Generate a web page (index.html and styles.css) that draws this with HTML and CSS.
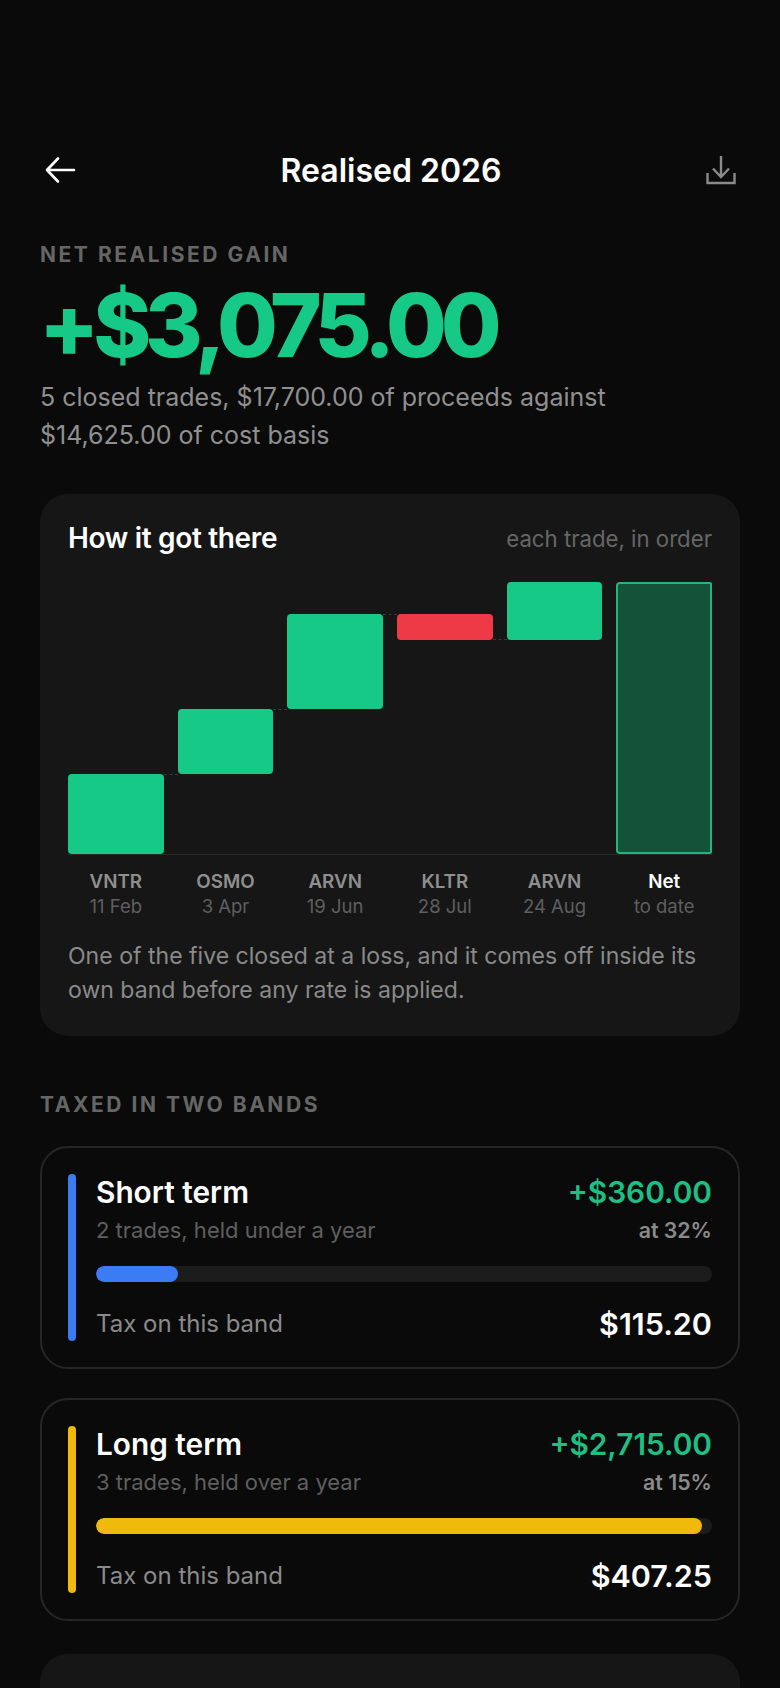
FILE: index.html
```html
<!DOCTYPE html>
<html lang="en">
<head>
<meta charset="utf-8">
<title>Realised 2026</title>
<link rel="stylesheet" href="styles.css">
</head>
<body>
<main class="screen">
  <header class="topbar">
    <svg class="icon icon-back" width="32" height="28" viewBox="0 0 32 28" fill="none" stroke="currentColor" stroke-width="2.6" stroke-linecap="round" stroke-linejoin="round"><path d="M30 14H3M14 2.500 3 14l11 11.500"/></svg>
    <h1 class="title">Realised 2026</h1>
    <svg class="icon icon-save" width="30" height="30" viewBox="0 0 30 30" fill="none" stroke="currentColor" stroke-width="2.400"><path d="M1.500 18v10h27V18"/><path d="M15 1v21M7 13.500l8 8.500 8-8.500"/></svg>
  </header>

  <section class="hero">
    <div class="eyebrow">NET REALISED GAIN</div>
    <div class="hero-value">+$3,075.00</div>
    <p class="hero-sub">5 closed trades, $17,700.00 of proceeds against<br>$14,625.00 of cost basis</p>
  </section>

  <section class="chart-card">
    <div class="chart-head">
      <h2 class="chart-title">How it got there</h2>
      <span class="chart-note">each trade, in order</span>
    </div>
    <div class="chart">
      <div class="col"><div class="bar up link-top" style="height:80px;margin-bottom:0"></div></div>
      <div class="col"><div class="bar up link-top" style="height:65px;margin-bottom:80px"></div></div>
      <div class="col"><div class="bar up link-top" style="height:95px;margin-bottom:145px"></div></div>
      <div class="col"><div class="bar down link-bottom" style="height:26px;margin-bottom:214px"></div></div>
      <div class="col"><div class="bar up" style="height:58px;margin-bottom:214px"></div></div>
      <div class="col"><div class="bar net" style="height:272px"></div></div>
    </div>
    <div class="axis">
      <div class="tick"><b>VNTR</b><span>11 Feb</span></div>
      <div class="tick"><b>OSMO</b><span>3 Apr</span></div>
      <div class="tick"><b>ARVN</b><span>19 Jun</span></div>
      <div class="tick"><b>KLTR</b><span>28 Jul</span></div>
      <div class="tick"><b>ARVN</b><span>24 Aug</span></div>
      <div class="tick tick-net"><b>Net</b><span>to date</span></div>
    </div>
    <p class="chart-foot">One of the five closed at a loss, and it comes off inside its own band before any rate is applied.</p>
  </section>

  <div class="eyebrow section-label">TAXED IN TWO BANDS</div>

  <section class="band">
    <div class="accent accent-blue"></div>
    <div class="band-body">
      <div class="band-row">
        <h3 class="band-name">Short term</h3>
        <span class="band-gain">+$360.00</span>
      </div>
      <div class="band-row band-row-sub">
        <span class="band-desc">2 trades, held under a year</span>
        <span class="band-rate">at 32%</span>
      </div>
      <div class="track"><div class="fill fill-blue" style="width:13.3%"></div></div>
      <div class="band-row band-row-tax">
        <span class="tax-label">Tax on this band</span>
        <span class="tax-value">$115.20</span>
      </div>
    </div>
  </section>

  <section class="band">
    <div class="accent accent-yellow"></div>
    <div class="band-body">
      <div class="band-row">
        <h3 class="band-name">Long term</h3>
        <span class="band-gain">+$2,715.00</span>
      </div>
      <div class="band-row band-row-sub">
        <span class="band-desc">3 trades, held over a year</span>
        <span class="band-rate">at 15%</span>
      </div>
      <div class="track"><div class="fill fill-yellow" style="width:98.4%"></div></div>
      <div class="band-row band-row-tax">
        <span class="tax-label">Tax on this band</span>
        <span class="tax-value">$407.25</span>
      </div>
    </div>
  </section>

  <section class="next-card"></section>
</main>
</body>
</html>
```
FILE: styles.css
```css
* { box-sizing: border-box; }
html, body { margin: 0; padding: 0; background: #0a0a0a; }
body { height: 1688px; overflow: hidden; font-family: Inter, "Liberation Sans", sans-serif; color: #fff; }
h1, h2, h3, p { margin: 0; font: inherit; }

.screen { width: 780px; height: 1688px; overflow: hidden; padding: 150px 40px 0; }

.topbar { display: flex; align-items: center; justify-content: space-between; height: 40px; position: relative; }
.icon { display: block; flex: none; }
.icon-back { color: #fff; margin-left: 4px; }
.icon-save { color: #8a8a8a; margin-right: 4px; margin-top: -1px; }
.title { font-size: 32px; font-weight: 600; line-height: 40px; padding-top: 1px; }

.hero { margin-top: 52px; }
.eyebrow { font-size: 21px; line-height: 26px; font-weight: 700; letter-spacing: 2.550px; color: #666; }
.hero-value { font-size: 88px; line-height: 96px; font-weight: 800; letter-spacing: -6.200px; color: #17c987; margin-top: 9px; margin-left: -1px; }
.hero-sub { font-size: 25px; line-height: 38px; color: #909090; margin-top: 5px; }

.chart-card { margin-top: 40px; height: 542px; background: #161616; border-radius: 28px; padding: 28px; }
.chart-head { display: flex; justify-content: space-between; align-items: center; height: 32px; }
.chart-title { font-size: 28px; font-weight: 600; line-height: 32px; letter-spacing: -0.330px; }
.chart-note { font-size: 22.200px; color: #666; }

.chart { display: grid; grid-template-columns: repeat(6, 1fr); column-gap: 14px; height: 273px; margin-top: 28px; border-bottom: 1px solid #2a2a2a; align-items: end; }
.col { display: flex; flex-direction: column; justify-content: flex-end; height: 272px; }
.bar { border-radius: 4px; position: relative; }
.up { background: #17c987; }
.down { background: #ee3a46; }
.net { background: #15523a; border: 2px solid #22b57f; border-radius: 4px 2px 2px 4px; }
.link-top::after, .link-bottom::after { content: ""; position: absolute; left: 100%; width: 14px; border-top: 1px dashed #3a3a3a; }
.link-top::after { top: 0; }
.link-bottom::after { bottom: 0; }

.axis { display: grid; grid-template-columns: repeat(6, 1fr); column-gap: 14px; margin-top: 15px; }
.tick { text-align: center; display: flex; flex-direction: column; align-items: center; }
.tick b { font-size: 18.800px; line-height: 24px; font-weight: 600; color: #8f8f8f; }
.tick span { font-size: 18.500px; line-height: 24px; color: #5f5f5f; }
.tick-net b { color: #fff; }

.chart-foot { font-size: 23.050px; line-height: 34px; color: #8a8a8a; margin-top: 21px; }

.section-label { margin-top: 56px; }

.band { display: flex; gap: 20px; height: 223px; border: 2px solid #262626; border-radius: 28px; padding: 26px; margin-top: 28px; }
.band + .band { margin-top: 29px; }
.accent { width: 8px; flex: none; border-radius: 4px; }
.accent-blue, .fill-blue { background: #3b7cf5; }
.accent-yellow, .fill-yellow { background: #f2b90d; }
.band-body { flex: 1; min-width: 0; }
.band-row { display: flex; justify-content: space-between; align-items: center; }
.band-name { font-size: 29.800px; line-height: 36px; font-weight: 600; }
.band-gain { font-size: 29.800px; line-height: 36px; font-weight: 600; color: #1fbf84; }
.band-row-sub { margin-top: 4px; height: 32px; }
.band-desc { font-size: 22px; color: #5f5f5f; }
.band-rate { font-size: 21.300px; font-weight: 600; color: #8a8a8a; }
.track { height: 16px; border-radius: 8px; background: #1c1c1c; margin-top: 20px; overflow: hidden; }
.fill { height: 100%; border-radius: 8px; }
.band-row-tax { margin-top: 20px; height: 42px; }
.tax-label { font-size: 24px; color: #8a8a8a; }
.tax-value { font-size: 30.500px; font-weight: 600; color: #fff; }

.next-card { margin-top: 33px; height: 200px; background: #161616; border-radius: 28px; }
```
